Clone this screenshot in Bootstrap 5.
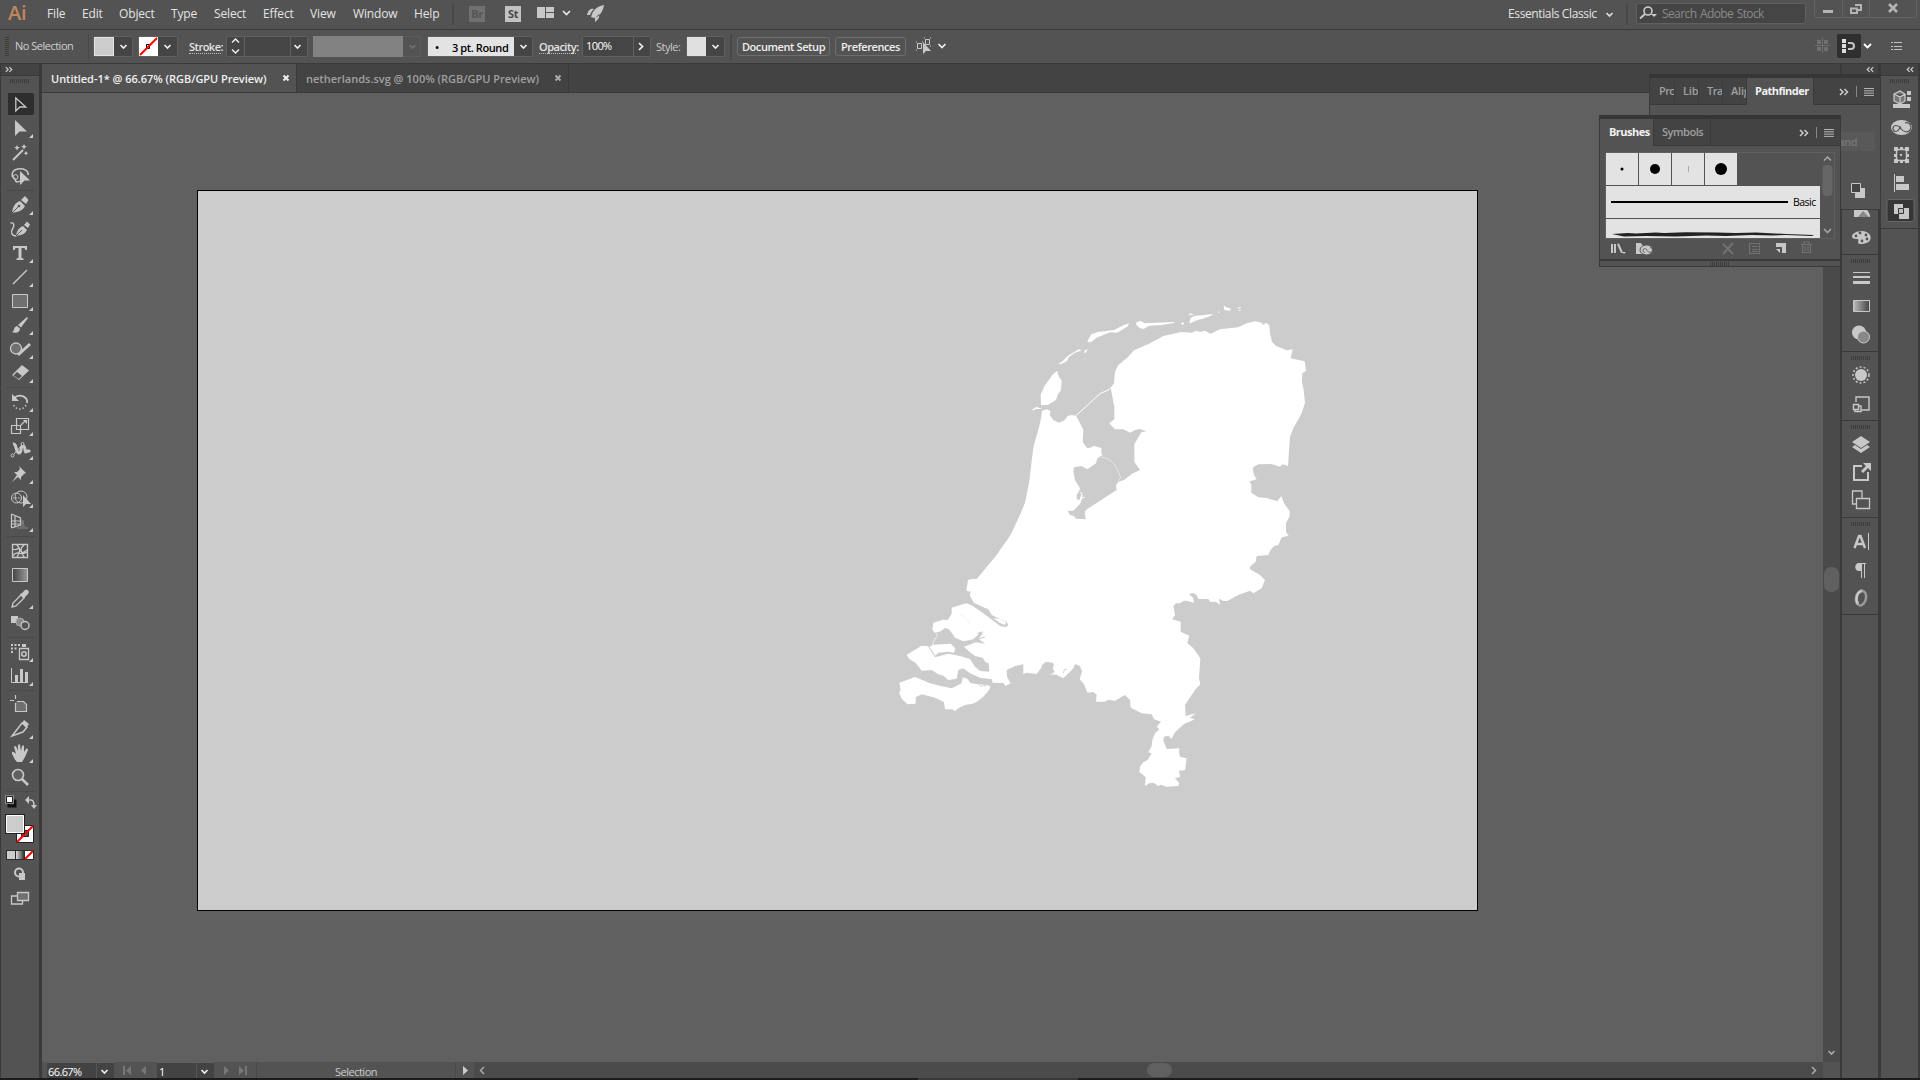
<!DOCTYPE html>
<html lang="en">
<head>
<meta charset="utf-8">
<title>Untitled-1 - Illustrator</title>
<link href="https://cdn.jsdelivr.net/npm/bootstrap@5.3.0/dist/css/bootstrap.min.css" rel="stylesheet">
<style>
:root{--pane:#535353;--deep:#434343;--edge:#3a3a3a;--ink:#c8c8c8}
body{width:1920px;height:1080px;overflow:hidden;background:var(--pane);color:#e4e4e4;font:11px/14px "Open Sans","Noto Sans",sans-serif;white-space:nowrap}
svg{display:block;flex:none}
.k{fill:none;stroke:var(--ink)}
.f{fill:var(--ink)}
.menubar{height:30px;border-bottom:1px solid var(--edge)}
.menubar .menu-item{font-size:12px;line-height:28px;flex:none;letter-spacing:-.15px}
.ai-logo{width:47px;padding-left:8px;font:600 20px/25px "Open Sans",sans-serif;color:#c0875f;flex:none;letter-spacing:-.2px}
.vline{width:2px;background:#484848;flex:none}
.appchip{width:16px;height:16px;background:#c2c2c2;color:#4a4a4a;font:bold 11px/16px "Open Sans",sans-serif;text-align:center;margin-top:6px;flex:none;letter-spacing:-.4px}
.searchbox{width:170px;height:21px;margin-top:3px;background:#454545;border:1px solid #606060;border-radius:3px;color:#8a8a8a;font-size:12px;line-height:20px;letter-spacing:-.33px}
.winctl{width:103px;height:18px;border:1px solid #636363;border-top:0;border-radius:0 0 3px 3px}
.winctl>div{height:17px}
.control{height:34px;border-bottom:1px solid var(--edge)}
.control>*{flex:none}
.dd{height:21px;border:1px solid #606060;border-radius:2px;background:#454545;margin-top:6px}
.lbl{font-size:11px;line-height:14px;margin-top:10px;letter-spacing:-.35px}
.strong-lbl{font-weight:600;border-bottom:1px dotted #bbb;line-height:14px;letter-spacing:-.5px;height:14px}
.barbtn{height:19px;margin-top:7px;border:1px solid #6e6e6e;border-radius:3px;font-weight:600;line-height:18px;text-align:center;letter-spacing:-.4px;color:#eee}
.toolcol{width:42px;background:var(--pane);border-left:1px solid var(--edge);border-right:3px solid var(--edge);flex:none}
.striphead{height:12px;background:var(--deep);border-bottom:1px solid var(--edge)}
.grip{width:19px;height:4px;background:repeating-linear-gradient(90deg,#3c3c3c 0 1px,#535353 1px 2px)}
.tools{padding:0 0 0 7px}
.tools>svg{width:26px;height:24px}
.sep{height:5px;margin-left:-2px;width:30px;border:solid var(--pane);border-width:2px 0;background:#4a4a4a}
.doctabs{height:29px;background:var(--deep);border-bottom:1px solid var(--edge);font-weight:600;font-size:11px;line-height:29px}
.doctabs>div{border-right:1px solid var(--edge);padding-left:9px;height:28px}
.canvas{background:#606060;height:969px;width:1781px;flex:none}
.artboard{width:1281px;height:721px;margin:97px 0 0 155px;border:1px solid #000;background:#ccc}
.vscroll{width:17px;height:969px;background:#4a4a4a;flex:none}
.thumb-v{width:15px;height:25px;border-radius:7px;background:#606060}
.statusbar{height:16px;background:#4b4b4b;flex:none}
.statusbar>*{flex:none}
.stfield{height:16px;background:#434343;border-top:1px solid #606060;border-left:1px solid #555;font-size:11px;line-height:18px;letter-spacing:-.6px;color:#fff;overflow:hidden}
.dock{background:var(--pane);flex:none}
.dockgroup{border-bottom:1px solid var(--edge)}
.dockgroup>.grip{margin:0 auto}
.float-panel{position:absolute;background:var(--pane);border:1px solid var(--edge);border-top:4px solid #363636}
.ptabs{height:27px;background:var(--deep);border-bottom:1px solid var(--edge);font-weight:600;line-height:26px;color:#a0a0a0;letter-spacing:-.2px}
.ptabs>div{flex:none;overflow:hidden;border-right:1px solid var(--edge)}
.ptabs .on{background:var(--pane);color:#f2f2f2;height:27px;font-weight:700;letter-spacing:-.52px}
.brushlist{width:230px;height:87px;border:1px solid #606060;overflow:hidden}
.tile{width:32px;height:32px;background:#e3e3e3}
.brushrow{width:214px;height:32px;background:#e3e3e3;color:#000}
</style>
<script src="https://cdn.jsdelivr.net/npm/bootstrap@5.3.0/dist/js/bootstrap.bundle.min.js"></script>
</head>
<body class="d-flex flex-column">
<svg width="0" height="0" class="position-absolute">
<defs>
<linearGradient id="gr"><stop offset="0" stop-color="#333"/><stop offset="1" stop-color="#ddd"/></linearGradient>
<linearGradient id="gl"><stop offset="0" stop-color="#bbb"/><stop offset="1" stop-color="#444"/></linearGradient>
<linearGradient id="gd"><stop offset="0" stop-color="#444"/><stop offset="1" stop-color="#999"/></linearGradient>
<symbol id="chev" viewBox="0 0 8 6"><path d="M1 1l3 3 3-3" fill="none" stroke="currentColor" stroke-width="1.7"/></symbol>
<symbol id="fly" viewBox="0 0 26 24"><path d="M25 18v4h-4z" fill="#d0d0d0"/></symbol>
<symbol id="dbl" viewBox="0 0 10 8"><path d="M1 1l3 3-3 3M5.500 1l3 3-3 3" fill="none" stroke="currentColor" stroke-width="1.500"/></symbol>
<symbol id="burger" viewBox="0 0 10 8"><path d="M0 .500h10M0 2.800h10M0 5.100h10M0 7.400h10" stroke="#b4b4b4"/></symbol>
</defs></svg>

<!-- Menu bar -->
<header class="menubar d-flex flex-shrink-0">
  <div class="ai-logo">Ai</div>
  <div class="menu-item" style="width:35px">File</div><div class="menu-item" style="width:37px">Edit</div><div class="menu-item" style="width:52px">Object</div><div class="menu-item" style="width:43px">Type</div><div class="menu-item" style="width:49px">Select</div><div class="menu-item" style="width:47px">Effect</div><div class="menu-item" style="width:43px">View</div><div class="menu-item" style="width:61px">Window</div><div class="menu-item" style="width:38px">Help</div>
  <div class="vline my-1" style="margin-right:15px"></div>
  <div class="appchip" style="background:#707070;color:#555">Br</div>
  <div class="appchip" style="margin-left:20px">St</div>
  <svg width="70" height="29" style="margin-left:16px"><path class="f" d="M0 7h8v11H0zM9 7h8v5H9zM9 13h8v5H9z"/><path d="M26 11l3.500 3.500L33 11" fill="none" stroke="#e8e8e8" stroke-width="1.700"/><path class="f" d="M67 5c-6 1-10 4-12 9l-1 3 3 1c5-1 9-6 10-13zM50 15c1-4 3-7 7-6-2 2-3 3-4 6zM58 22v-4l4-4c1 3-1 6-4 8z"/></svg>
  <div class="menu-item ms-auto" style="width:97px;letter-spacing:-.38px">Essentials Classic</div>
  <svg width="18" height="29" color="#ddd"><use href="#chev" x="0" y="12" width="9" height="6"/></svg>
  <div class="vline my-1" style="margin:0 8px 0 3px"></div>
  <div class="searchbox d-flex"><svg width="24" height="19"><circle cx="11" cy="7" r="4" fill="none" stroke="#ccc" stroke-width="1.600"/><path d="M8 10l-5 4.500" stroke="#ccc" stroke-width="1.800"/><path d="M14 10h6l-3 3z" fill="#ccc"/></svg><span style="letter-spacing:-.6px;word-spacing:1px;padding-left:1px">Search Adobe Stock</span></div>
  <div class="winctl d-flex" style="margin:0 3px 0 8px">
    <div style="width:28px;border-right:1px solid #636363"><svg width="27" height="17"><path d="M8 10h10v3H8z" fill="#b4b4b4"/></svg></div>
    <div style="width:27px;border-right:1px solid #636363"><svg width="26" height="17"><path d="M12 5h6v5h-3M8 8.500h6V13H8z" fill="none" stroke="#b4b4b4" stroke-width="2"/></svg></div>
    <div><svg width="44" height="17"><path d="M19 4l8 8M27 4l-8 8" stroke="#b4b4b4" stroke-width="2.600"/></svg></div>
  </div>
</header>

<!-- Control bar -->
<div class="control d-flex flex-shrink-0">
  <div style="width:4px;height:19px;margin:7px 6px 0 5px;background:repeating-linear-gradient(#3c3c3c 0 1px,#535353 1px 2px)"></div>
  <div class="lbl" style="width:73px;margin-top:9px;color:#d0d0d0;letter-spacing:-.5px">No Selection</div>
  <div class="vline" style="height:26px;margin:4px 3px 0 0;width:1px"></div>
  <div class="dd d-flex" style="width:40px;margin-left:1px"><div style="width:20px;background:#ccc;border:1px solid #e4e4e4"></div><svg width="18" height="19" color="#eee"><use href="#chev" x="5" y="7" width="9" height="6"/></svg></div>
  <div class="dd d-flex" style="width:40px;margin-left:5px"><svg width="19" height="19"><path fill="#fff" d="M0 0h19v19H0z"/><path d="M7.500 7.500h3v4h-3z" fill="none" stroke="#000"/><path d="M1 18L18 1" stroke="#f00" stroke-width="2"/></svg><svg width="19" height="19" color="#eee"><use href="#chev" x="5" y="7" width="9" height="6"/></svg></div>
  <div class="lbl strong-lbl" style="margin-left:11px;width:32px">Stroke:</div>
  <div class="dd d-flex" style="width:82px;margin-left:5px"><svg width="17" height="19"><path d="M5 5.500L8.500 2 12 5.500M5 12.500l3.500 3.500 3.500-3.500" fill="none" stroke="#eee" stroke-width="1.500"/></svg><div style="width:46px;border-left:1px solid #606060"></div><svg width="17" height="19" color="#eee" style="border-left:1px solid #606060"><use href="#chev" x="2" y="7" width="9" height="6"/></svg></div>
  <div style="width:90px;height:21px;margin:6px 0 0 5px;background:#828282"></div>
  <div style="width:18px;height:21px;margin-top:6px;border:1px solid #5c5c5c;border-left:0"><svg width="17" height="19" color="#707070"><use href="#chev" x="5" y="7" width="9" height="6"/></svg></div>
  <div class="dd d-flex" style="width:106px;margin-left:6px"><div class="d-flex text-black" style="width:86px;background:#e3e3e3;line-height:21px;font-weight:600;letter-spacing:-.4px"><span style="width:24px;padding-left:7px">•</span>3 pt. Round</div><svg width="18" height="19" color="#eee"><use href="#chev" x="5" y="7" width="9" height="6"/></svg></div>
  <div class="lbl strong-lbl" style="margin-left:6px;width:37px">Opacity:</div>
  <div class="dd d-flex" style="width:69px;margin-left:6px;line-height:18px;letter-spacing:-.6px"><div style="width:50px;padding-left:3px;color:#fff">100%</div><svg width="17" height="19" style="border-left:1px solid #606060"><path d="M5 6l3.500 3.500L5 13" fill="none" stroke="#eee" stroke-width="1.700"/></svg></div>
  <div class="lbl" style="margin-left:5px;width:30px;color:#ccc;letter-spacing:-.5px">Style:</div>
  <div class="dd d-flex" style="width:39px"><div style="width:19px;background:#e0e0e0"></div><svg width="18" height="19" color="#eee"><use href="#chev" x="5" y="7" width="9" height="6"/></svg></div>
  <div class="vline" style="height:26px;margin:4px 5px 0 5px"></div>
  <div class="barbtn" style="width:93px">Document Setup</div>
  <div class="barbtn" style="width:71px;margin-left:5px">Preferences</div>
  <svg width="40" height="33" style="margin-left:9px"><path class="k" d="M2.500 13.500h4v5h-4zM10.500 9.500h4v5h-4zM1 12h1M1 20h1M7 12h1M9 8h1M15 8h1M15 16h1"/><path class="f" d="M8 12v12l3-3h5z"/><path d="M23.500 14l3.500 3.500 3.500-3.500" fill="none" stroke="#eee" stroke-width="1.700"/></svg>
  <svg width="105" height="33" class="ms-auto"><path d="M2 10h4v4H2zM9 10h4v4H9zM2 17h4v4H2zM9 17h4v4H9zM7 8h1v15H7zM0 15h15v1H0z" fill="#707070"/><rect x="22" y="4" width="24" height="24" rx="2" fill="#2f2f2f"/><path fill="#ddd" d="M27 9h4v4h-4zM27 14h4v4h-4zM27 19h4v4h-4z"/><path d="M33 13h3a3 3 0 010 6h-3" fill="none" stroke="#c4c4c4" stroke-width="2"/><path d="M49 14l3.500 3.500L56 14" fill="none" stroke="#fff" stroke-width="1.800"/><path stroke="#c4c4c4" stroke-width="1.200" d="M76 12.500h2M79 12.500h8M76 16.500h2M79 16.500h8M76 19.500h2M79 19.500h8"/></svg>
</div>

<div class="d-flex flex-shrink-0" style="height:1014px">
  <!-- Tools -->
  <aside class="toolcol">
    <div class="striphead"><svg width="20" height="11" color="#ccc"><use href="#dbl" x="4" y="2" width="8" height="7"/></svg></div>
    <div class="grip" style="margin:3px 0 9px 9px"></div>
    <div class="tools">
      <svg viewBox="0 0 26 24"><path d="M-2 3a2 2 0 012-2h24a2 2 0 012 2v18a2 2 0 01-2 2H0a2 2 0 01-2-2z" fill="#2e2e2e"/><path class="k" stroke-width="1.300" d="M7.800 6v13l4-4h6z"/></svg>
      <svg viewBox="0 0 26 24"><path class="f" d="M7 4v16l4.500-4.500H19z"/><use href="#fly"/></svg>
      <svg viewBox="0 0 26 24"><path class="k" stroke-width="2" d="M5 20L15 10"/><path class="f" d="M9 5l1 2 2 .500-2 1-1 2-1-2-2-1 2-.500zM16 4l1 2 2 .500-2 1-1 2-1-2-2-1 2-.500zM18 11l.800 1.500 1.500.800-1.500.700-.800 1.500-.800-1.500-1.500-.700 1.500-.800z"/></svg>
      <svg viewBox="0 0 26 24"><path class="k" stroke-width="1.500" d="M12 17c-3 2-6 0-4-2M7 15C2 12 4 6 10 5s11 2 10 6"/><circle class="k" cx="7.500" cy="13" r="2.400"/><path class="f" d="M12 7v14l4.500-4.500H22z"/></svg>
      <div class="sep"></div>
      <svg viewBox="0 0 26 24"><path class="f" d="M4 20c1-7 3-10 8-12l5 5c-2 4-6 6-13 7zM13 7l4-4 3.500 4L18 11z"/><path d="M4 20l7-7" stroke="#535353"/><circle cx="11" cy="13" r="1.300" fill="#535353"/><use href="#fly"/></svg>
      <svg viewBox="0 0 26 24"><path class="f" d="M8 19c1-6 3-8 7-10l4 4c-2 4-5 5-11 6zM16 8l3-3.500 3 3-2 3.500z"/><path class="k" stroke-width="1.400" d="M2.500 6c4-1 4 3 2 6s-1 7 4 7"/><path d="M8 19l6-6" stroke="#535353"/></svg>
      <svg viewBox="0 0 26 24"><path class="f" d="M5 5h14v4h-1.500l-1-2H13.500v10l2 .500V19h-7v-1.500l2-.500V7H7.500l-1 2H5z"/><use href="#fly"/></svg>
      <svg viewBox="0 0 26 24"><path class="k" stroke-width="1.500" d="M5 19L19 5"/><use href="#fly"/></svg>
      <svg viewBox="0 0 26 24"><path d="M4.500 5.500h15v13h-15z" fill="#707070" stroke="#c8c8c8"/><use href="#fly"/></svg>
      <svg viewBox="0 0 26 24"><path class="f" d="M4 19c3-1 1-5 5-6l3 2.500c0 4-4 5-8 3.500zM10 12L19 4l1 1-7 9.500z"/><use href="#fly"/></svg>
      <svg viewBox="0 0 26 24"><circle cx="8" cy="11.500" r="5.500" fill="#707070" stroke="#c8c8c8" stroke-width="1.300"/><path class="k" stroke-width="3" d="M10 18L22 7"/><use href="#fly"/></svg>
      <svg viewBox="0 0 26 24"><path class="f" d="M4 14L14 4l7 5.500L11 19z"/><path d="M5.500 14.500l3.500-3.500 5 4-3.500 3z" fill="#535353"/><use href="#fly"/></svg>
      <div class="sep"></div>
      <svg viewBox="0 0 26 24"><path class="k" stroke-width="1.700" d="M6 8c6-5 14-1 13 5"/><path class="k" stroke-dasharray="1.500 2" stroke-width="1.500" d="M18 15c-2 5-10 6-13-1"/><path class="f" d="M4 4v7h7z"/><use href="#fly"/></svg>
      <svg viewBox="0 0 26 24"><path class="k" stroke-width="1.200" d="M8.500 4.500h12v11h-12zM3.500 11.500h9v8h-9zM13 11l5-5"/><path class="f" d="M15 6h4v4z"/><use href="#fly"/></svg>
      <svg viewBox="0 0 26 24"><path class="k" stroke-width="3" d="M5 6c4-1 2 8 6 9 3 0 1-7 4-7s1 6 3 6 1-3 4 0"/><circle class="k" cx="4.500" cy="17.500" r="1.500"/><circle cx="14.500" cy="6" r="1.500" fill="#535353" stroke="#c8c8c8"/><path class="k" d="M6 16l8-9"/><use href="#fly"/></svg>
      <svg viewBox="0 0 26 24"><path class="f" d="M11 4l7 7-2 1-3 3v3l-3-3-6 5 5-7-3-3h3l3-3z"/><use href="#fly"/></svg>
      <svg viewBox="0 0 26 24"><circle cx="8.500" cy="12" r="5" class="k"/><circle cx="13" cy="11" r="6" class="k"/><path class="k" stroke-dasharray="1.500 1" d="M5 12h8"/><path class="f" d="M15 9v12l3-3h5z"/><use href="#fly"/></svg>
      <svg viewBox="0 0 26 24"><path class="k" stroke-width="1.200" d="M3.500 4v14M3.500 4l9 4v7l-9 3M7 6v11M3 11h10M3 14h12"/><path stroke="#888" d="M13 16h4M9 18h11"/><path d="M13 9l3 2v4h-3z" fill="#777"/><use href="#fly"/></svg>
      <div class="sep"></div>
      <svg viewBox="0 0 26 24"><path class="k" stroke-width="1.300" d="M4.500 5.500h15v13h-15zM5 10c5 3 5-4 7 1s5 1 7 0M5 17c4-7 8 1 14-4M9 6c4 4 3 7 0 12M16 6c-5 4-3 7 0 12"/></svg>
      <svg viewBox="0 0 26 24"><path d="M4.500 5.500h15v13h-15z" fill="url(#gd)" stroke="#c8c8c8"/></svg>
      <svg viewBox="0 0 26 24"><path class="k" stroke-width="1.300" d="M13 8l3 3-8 8-4 1 1-4z"/><path class="f" d="M12 7l2-1 3-3c3-1 5 2 3 4l-3 3-1 2z"/><use href="#fly"/></svg>
      <svg viewBox="0 0 26 24"><path class="f" d="M3 5h7v7H3z"/><circle cx="12" cy="11" r="4" fill="#888" stroke="#aaa"/><circle cx="17" cy="14.500" r="4" fill="#535353" stroke="#c8c8c8" stroke-width="1.400"/></svg>
      <div class="sep"></div>
      <svg viewBox="0 0 26 24"><path class="k" stroke-width="1.300" d="M11.500 8.500h9v11h-9z"/><path class="f" d="M14 4h4v3h-4zM3 4h2v2H3zM6.500 4h2v2h-2zM10 4h2v2h-2zM3 7.500h2v2H3zM6.500 7.500h2v2h-2zM3 11h2v2H3z"/><circle class="k" stroke-width="1.500" cx="16" cy="14" r="2.200"/><use href="#fly"/></svg>
      <svg viewBox="0 0 26 24"><path class="k" d="M3.500 4v14.500H20"/><path class="f" d="M7 11h3v7H7zM12 5h3v13h-3zM17 8h3v10h-3z"/><use href="#fly"/></svg>
      <div class="sep"></div>
      <svg viewBox="0 0 26 24"><path d="M7.500 8.500h8l3 3v7h-11z" fill="#707070"/><path class="k" stroke-width="1.200" d="M7.500 10v8.500h11v-7l-3-3H9M2 7.500h4M7.500 2v4"/></svg>
      <svg viewBox="0 0 26 24"><path class="k" stroke-width="1.500" d="M4 19L14 6l5 4-4 5z"/><path class="f" d="M14 6l2-3 5 4-3 4z"/><use href="#fly"/></svg>
      <svg viewBox="0 0 26 24"><path class="f" d="M4 11c1-1 3 1 4 2L6 6c1-2 2-1 3 1l1 3V4c1-1 2-1 2 0l1 6 1-5c1-1 2-1 2 1v5l2-3c1-1 2 0 2 1l-3 7-3 5h-5c-3-3-4-7-5-8z"/><use href="#fly"/></svg>
      <svg viewBox="0 0 26 24"><circle cx="10" cy="10" r="5.500" fill="#606060" stroke="#c8c8c8" stroke-width="1.600"/><path class="k" stroke-width="2.500" d="M14 14l6 6"/></svg>
      <div class="sep"></div>
      <svg style="width:33px;height:116px;margin-left:-4px"><path d="M11 5.500V12H5V9" fill="none" stroke="#111" stroke-width="3"/><path d="M2.500 2.500h6v6h-6z" fill="#fff" stroke="#222"/><path d="M1.500 1.500h8v8h-8z" fill="none" stroke="#888"/><path class="k" stroke-width="1.500" d="M24 6h3c2 0 3 1 3 6"/><path class="f" d="M21 6l4-4v8zM27 11h6l-3 4z"/>
        <path d="M12.500 31.500h17v17h-17z" fill="#fff" stroke="#222"/><path d="M17.500 36.500h7v6h-7z" fill="#535353" stroke="#222"/><path d="M13 48L29 32" stroke="#f00" stroke-width="2"/><path d="M1 20h20v20H1z" fill="#222"/><path d="M2.500 21.500h17v17h-17z" fill="#ccc" stroke="#fff"/>
        <path fill="#2e2e2e" d="M2 56h28v10H2z"/><path fill="#ccc" d="M3 57h8v8H3z"/><path fill="url(#gr)" d="M12 57h8v8h-8z" transform="matrix(-1 0 0 1 32 0)"/><path fill="#fff" d="M21 57h8v8h-8z"/><path d="M21 65l8-8" stroke="#f00" stroke-width="2"/>
        <circle cx="15" cy="78.500" r="4" class="k" stroke-width="2"/><path class="f" d="M15 79h6v7h-6z"/>
        <path stroke="#c8c8c8" stroke-width="1.300" d="M13.500 98.500h11v8h-11z" fill="#707070"/><path class="k" stroke-width="1.300" d="M13 102H7.500v8h11v-3.500"/></svg>
    </div>
  </aside>

  <!-- Document window -->
  <main class="d-flex flex-column" style="width:1798px">
    <div class="doctabs d-flex">
      <div class="d-flex" style="width:255px;background:var(--pane);color:#f0f0f0"><span style="width:231px;letter-spacing:-.03px">Untitled-1* @ 66.67% (RGB/GPU Preview)</span><svg width="8" height="28"><path d="M1.500 11.500l5 5M6.500 11.500l-5 5" stroke="#eee" stroke-width="2"/></svg></div>
      <div class="d-flex" style="width:272px;color:#a0a0a0"><span style="width:248px">netherlands.svg @ 100% (RGB/GPU Preview)</span><svg width="8" height="28"><path d="M1.500 11.500l5 5M6.500 11.500l-5 5" stroke="#aaa" stroke-width="2"/></svg></div>
    </div>
    <div class="d-flex">
      <div class="canvas">
        <div class="artboard">
          <svg width="1279" height="719" viewBox="198 191 1279 719" fill="#fff">
            <g transform="translate(1000 290) scale(.33333)">
              <path d="M-4 786L20 752 35 728 60 675 75 638 87 580 93 530 99 480 103 460 115 420 123 385 126 362 140 358 152 363 149 375 160 390 176 398 192 392 203 378 215 375 228 377 238 395 250 420 248 457 262 475 275 472 281 467 304 474 304 490 308 495 292 505 288 520 262 538 245 528 222 532 220 545 225 570 240 595 235 612 242 605 248 612 246 620 256 621 246 626 240 642 220 662 203 662 210 675 222 678 228 686 257 688 254 665 262 657 350 600 348 585 356 575 372 570 395 552 420 540 403 515 403 463 424 427 440 424 420 417 405 420 390 428 370 418 345 418 328 400 343 388 343 350 335 310 332 293 342 280 345 245 355 225 385 200 402 181 450 160 490 138 545 126 575 128 590 122 600 126 615 122 632 131 660 118 715 112 740 100 765 94 785 98 790 105 798 98 808 106 810 130 816 155 828 168 860 181 878 178 872 205 914 214 918 243 907 250 906 275 911 300 915 338 905 370 880 415 870 440 864 528 848 523 840 530 815 522 775 523 762 530 758 535 762 555 770 568 748 574 754 584 754 608 775 622 800 624 832 634 844 618 852 640 870 665 868 680 858 700 858 725 866 737 845 742 835 765 822 768 806 786z"/>
              <path d="M123 345l-1-30 10-25 25-35 14-13 6 18 8 12-2 28-10 15-5 15-25 15z"/>
              <path d="M97 358l12-7 18 5-22 2-6 4zM174 220l10-3 20-20 32-19 10 3-23 8-18 14-3 9-19 11zM252 188l3-8 8-2-5 10zM264 150l10-17 20-7 48-6 28-14 17-6-3 9-32 19-22-1-40 16-18 14-10-1zM409 97l12-4 14 7 86-4 4 2-40 7-38 2-16 10-12-3-10-10zM543 100l6-4 3 6-5 3zM568 98l4-14 10-6 58-6-10 7-22 7-22 6-14 8zM566 76l4-6 12 4-12 2zM653 64l6 2-3 4zM671 46l8 6 15 4-6 6-15-2zM710 53l15-1-8 5zM713 62l8-3 1 4z"/>
              <path d="M228 377L300 311 327 299 334 291" fill="none" stroke="#fff" stroke-width="3"/>
              <path d="M304 503c28-5 48 30 58 60l-8 10" fill="none" stroke="#fff" stroke-width="1.500"/>
              <path d="M230 615l8-12 6 10-6 18-8-4z" fill="#ccc"/>
            </g>
            <g transform="translate(880 540) scale(.33333)">
              <path d="M388-6L350 45 290 117 275 117 264 120 259 152 272 155 269 165 281 188 298 196 310 202 325 208 335 225 380 246 385 256 378 261 362 259 330 235 300 213 275 196 258 190 215 203 215 222 203 240 190 239 160 248 157 268 164 278 182 274 195 264 207 268 218 283 225 293 250 304 280 298 296 283 292 279 308 274 306 284 294 294 303 302 316 311 288 307 252 320 270 337 285 348 308 353 316 366 326 370 328 395 300 393 285 380 270 357 240 348 205 341 165 352 144 319 125 317 90 338 80 345 88 357 108 370 125 392 155 390 175 403 190 407 205 420 230 416 235 390 250 385 270 400 300 413 335 418 338 428 370 429 377 438 392 430 381 410 380 390 405 378 430 373 430 403 440 398 470 402 484 383 485 376 498 365 518 368 522 375 518 385 524 395 515 402 503 403 530 404 550 415 570 395 580 385 585 372 600 378 606 395 599 418 612 433 622 458 640 456 650 464 648 485 675 485 685 479 705 482 735 465 750 480 752 503 785 520 815 523 822 538 843 545 830 560 838 568 825 580 817 600 815 618 805 637 815 640 803 660 790 667 780 680 778 695 797 712 795 738 808 730 820 728 835 738 842 734 860 740 895 738 898 730 885 715 900 710 897 692 915 690 920 655 900 650 897 636 898 625 860 627 850 602 852 590 865 587 875 597 885 577 912 552 945 538 930 533 947 520 917 528 915 495 945 450 961 433 957 415 961 355 940 325 922 310 928 287 902 275 902 245 877 238 885 225 880 198 888 190 900 190 912 182 925 183 942 189 939 173 927 162 940 159 950 165 955 177 985 177 990 185 1008 185 1020 195 1017 176 1028 182 1042 183 1075 165 1110 152 1120 160 1145 145 1155 120 1140 105 1110 88 1110 80 1127 65 1130 48 1165 45 1175 22 1195 10 1203-6z"/>
              <path d="M58 428L105 411 122 418 150 430 182 438 215 445 245 430 248 412 262 416 272 430 310 434 331 438 328 449 310 470 290 486 275 492 258 494 240 502 225 513 216 508 195 508 192 487 175 478 160 472 125 463 107 472 107 491 83 493 66 478 57 458 62 450zM148 320L160 314 212 311 226 325 222 338 205 335 175 338 165 347 160 338z"/>
              <path d="M170 278l2 9-12 18-2 10" fill="none" stroke="#fff" stroke-width="2"/>
              <path d="M340 234l20 3 18 10-3 7-14-4z"/>
              <path d="M294 432l10 8 8-7 3 8M550 400l3-11 8-1" fill="none" stroke="#ccc" stroke-width="2.500"/>
              <path d="M238 224q27 8 30 30" fill="none" stroke="#e8e8e8" stroke-width="1.500"/>
              <path d="M302 284l-6 12 20-5" fill="none" stroke="#ccc" stroke-width="3"/>
            </g>
          </svg>
        </div>
      </div>
      <div class="vscroll"><div class="thumb-v" style="margin:474px 1px 0"></div><svg width="17" height="20" style="margin-top:450px" color="#aaa"><use href="#chev" x="4" y="8" width="9" height="6"/></svg></div>
    </div>
    <div class="statusbar d-flex">
      <div style="width:4px;background:var(--pane)"></div>
      <div class="stfield" style="width:50px;padding-left:1px">66.67%</div><div class="stfield" style="width:18px"><svg width="17" height="15" color="#eee"><use href="#chev" x="3" y="6" width="9" height="6"/></svg></div>
      <svg width="42" height="16"><path fill="#535353" d="M0 0h42v16H0z"/><path d="M9 4h2v9H9zM17 4v9l-5-4.500zM32 4v9l-5-4.500z" fill="#777"/></svg>
      <div class="stfield" style="width:40px;padding-left:2px">1</div><div class="stfield" style="width:18px"><svg width="17" height="15" color="#eee"><use href="#chev" x="3" y="6" width="9" height="6"/></svg></div>
      <svg width="42" height="16"><path fill="#535353" d="M0 0h42v16H0z"/><path d="M10 4v9l5-4.500zM25 4v9l5-4.500zM31 4h2v9h-2z" fill="#777"/></svg>
      <div class="text-center" style="width:199px;background:var(--pane);border-left:1px solid #4a4a4a;line-height:19px;color:#ccc;letter-spacing:-.5px;overflow:hidden;height:16px">Selection</div>
      <svg width="19" height="16"><path fill="#535353" d="M1 0h18v16H1z"/><path d="M8 4v9l5-4.500z" fill="#ccc"/></svg>
      <svg width="1349" height="16"><path d="M10 5L6.500 8.500 10 12M1338 5l3.500 3.500-3.500 3.500" fill="none" stroke="#aaa" stroke-width="1.500"/><rect x="673" y="1" width="25" height="14" rx="7" fill="#606060"/></svg>
      <div style="background:var(--pane);flex:1 1 0"></div>
    </div>
  </main>

  <!-- Docks -->
  <div class="dock" style="width:41px;border:solid var(--edge);border-width:0 3px 0 2px">
    <div class="striphead"><svg width="34" height="11" color="#ccc"><use href="#dbl" transform="matrix(-1 0 0 1 32 2)" width="8" height="7"/></svg></div>
    <div class="dockgroup" style="height:179px"><svg width="36" height="178"><path d="M12 141v-9h11q5 4 5 9z" class="f"/><path d="M16 141l5-6 6 6z" fill="#888"/><path class="f" d="M10 160c1-5 14-8 18-1 3 7-5 9-9 9-6 0 0-5-4-5-2 0-5 0-5-3z"/><g fill="#535353"><circle cx="14" cy="160" r="1.400"/><circle cx="18" cy="157" r="1.400"/><circle cx="24" cy="159" r="1.400"/><circle cx="25" cy="163" r="1.400"/><circle cx="20" cy="165" r="1.400"/></g></svg></div>
    <div class="dockgroup pt-1" style="height:97px"><div class="grip"></div><svg width="36" height="88"><path class="f" d="M11 9h17v1H11zM11 13h17v2H11zM11 18h17v3H11z"/><path d="M11.500 37.500h16v11h-16z" fill="url(#gl)" stroke="#c8c8c8"/><circle class="f" cx="17" cy="69.500" r="7"/><circle cx="21.500" cy="74" r="6" fill="#888" stroke="#c8c8c8"/></svg></div>
    <div class="dockgroup pt-1" style="height:69px"><div class="grip"></div><svg width="36" height="60"><circle class="f" cx="19" cy="15" r="6"/><circle class="k" cx="19" cy="15" r="8" stroke-dasharray="2 2" stroke-width="1.500"/><path class="k" stroke-width="1.400" d="M14 42v-5h13v13H19M11.500 44.500h5v5h-5zM13 50v1.500h6V46h-2"/></svg></div>
    <div class="dockgroup pt-1" style="height:97px"><div class="grip"></div><svg width="36" height="88"><path class="f" d="M19 7l9 6-9 6-9-6zM10 18l3-2 6 4 6-4 3 2-9 6z"/><path class="k" stroke-width="2" d="M20 37h-8v14h14v-8"/><path class="f" d="M21 34h8v8l-3-3-5 5-2-2 5-5z"/><path class="k" stroke-width="1.300" d="M20 69v-7h-9.500v13H15M14.500 69.500h13v10h-13z"/></svg></div>
    <div class="dockgroup pt-1" style="height:97px"><div class="grip"></div><svg width="36" height="88"><path class="k" stroke-width="2.400" d="M12.500 22l4.500-12h1.500l4.500 12M14 18h7.500"/><path class="f" d="M26 7h1v17h-1z"/><path class="f" d="M17 37h7v1h-1v14h-1V38h-2v14h-1v-7h-2c-5 0-5-8 0-8z"/><ellipse cx="19" cy="72" rx="5" ry="7.500" transform="rotate(12 19 72)" fill="none" stroke="#999" stroke-width="2.500"/><path class="k" stroke-width="2.500" d="M20 65c-5 1-7 8-4 13"/></svg></div>
  </div>
  <div class="dock" style="width:39px;border-right:2px solid var(--edge)">
    <div class="striphead"><svg width="34" height="11" color="#ccc"><use href="#dbl" transform="matrix(-1 0 0 1 33 2)" width="8" height="7"/></svg></div>
    <div class="dockgroup" style="height:153px;padding-top:3px"><div class="grip"></div><svg width="37" height="144"><g transform="translate(-1881 -83)"><path d="M1894 94l6-3 5 3v7l-5 3-6-3zM1894 94l6 3 5-3M1900 97v7" fill="#777" stroke="#ccc" stroke-width="1.200"/><path class="f" d="M1907 91h4v4h-4zM1907 97h4v4h-4zM1893 104h17v4h-17z"/><ellipse cx="1901.500" cy="127.500" rx="10.500" ry="7.500" class="f"/><path d="M1905 123a4.500 4.500 0 110 8.500c-4 0-4-6-9-6a3 3 0 100 6c3 0 3-3 5-5" fill="none" stroke="#535353" stroke-width="1.200"/><path class="k" stroke-width="1.500" d="M1896.500 149.500h10v11h-10z"/><path class="f" d="M1894 147h4v4h-4zM1900 147h3v3h-3zM1905 147h4v4h-4zM1894 159h4v4h-4zM1900 160h3v3h-3zM1905 159h4v4h-4zM1894 154h3v3h-3zM1906 154h3v3h-3zM1900 154h2v2h-2zM1894 174h1v18h-1zM1896 176h8v6h-8zM1896 184h13v6h-13z"/><rect x="1887" y="199.500" width="27" height="22" rx="2" fill="#363636" stroke="#666"/><path class="f" d="M1894 204h9v4h6v11h-10v-5h-5z"/><path d="M1898.500 208.500h5v5h-5z" fill="#bbb" stroke="#333"/></g></svg></div>
  </div>
</div>
<div class="flex-grow-1" style="background:linear-gradient(90deg,#1d1b1c 918px,#3a3839 918px 1078px,#1d1b1c 1078px)"></div>

<!-- Pathfinder panel -->
<section class="float-panel" style="left:1649px;top:74px;width:232px;height:136px">
  <div class="ptabs d-flex">
    <div style="width:25px;padding-left:9px;letter-spacing:-.6px">Pro</div><div style="width:24px;padding-left:8px">Lib</div><div style="width:24px;padding-left:8px;letter-spacing:-.5px">Tra</div><div style="width:24px;padding-left:8px">Alig</div><div class="on" style="width:67px;padding-left:8px">Pathfinder</div>
    <svg class="ms-auto" width="42" height="26" color="#ccc"><use href="#dbl" x="1" y="10" width="10" height="8"/><path stroke="#888" d="M18.500 8v11"/><use href="#burger" x="26" y="10" width="10" height="8"/></svg>
  </div>
  <div class="d-flex justify-content-end" style="padding:27px 5px 0 0"><div style="width:60px;height:19px;background:#595959;border-radius:2px;color:#777;font-weight:600;line-height:20px;text-align:right;padding-right:18px;letter-spacing:-.5px">Expand</div></div>
  <svg width="230" height="30" style="margin-top:27px"><path class="f" d="M206 10h9v10h-10v-4z"/><path d="M201.500 5.500h9v9h-9z" fill="#444" stroke="#c8c8c8"/></svg>
</section>

<!-- Brushes panel -->
<section class="float-panel" style="left:1599px;top:115px;width:242px;height:152px">
  <div class="ptabs d-flex">
    <div class="on" style="width:54px;padding-left:9px">Brushes</div><div style="width:57px;padding-left:8px;letter-spacing:-.45px">Symbols</div>
    <svg class="ms-auto" width="42" height="26" color="#ccc"><use href="#dbl" x="1" y="10" width="10" height="8"/><path stroke="#888" d="M18.500 8v11"/><use href="#burger" x="26" y="10" width="10" height="8"/></svg>
  </div>
  <div class="brushlist d-flex" style="margin:6px 0 0 5px">
    <div class="d-flex flex-column" style="gap:1px;width:216px">
      <div class="d-flex" style="gap:1px"><svg class="tile"><circle cx="16" cy="16" r="1.500"/></svg><svg class="tile"><circle cx="16" cy="16" r="5"/></svg><svg class="tile"><path d="M16.500 13v6" stroke="#aaa"/></svg><svg class="tile"><circle cx="16" cy="16" r="6"/></svg></div>
      <div class="brushrow d-flex"><div style="width:177px;height:2px;margin:15px 5px 0 5px;background:#000"></div><span style="line-height:33px;font-size:10.500px;letter-spacing:-.5px">Basic</span></div>
      <svg class="brushrow" width="214" height="32"><path d="M6 15l16-1 8 .500 20-1 8 .500 22-.800 30 .300 20 .500 20-.500 30 1.500 28 1-2 1-26-1-14 .500-20-.500-26 1-20-.500-30 1-30-.500-22 .500z" fill="#222"/></svg>
    </div>
    <svg width="13" height="85"><path d="M3 7.500L6.500 4 10 7.500M3 76l3.500 3.500L10 76" fill="none" stroke="#aaa" stroke-width="1.500"/><rect x="1.500" y="12" width="10" height="31" rx="4" fill="#666"/></svg>
  </div>
  <svg width="240" height="20"><g transform="translate(-1600 -239)"><path class="f" d="M1611 244h2v9h-2zM1614 244h2v9h-2zM1617 244l2-.500 4 9-2 .500zM1622 252h4l-2 2z"/><path class="f" d="M1636 243h5l1 2h8v9h-14z"/><ellipse cx="1646.500" cy="250" rx="6.500" ry="5" fill="#c8c8c8" stroke="#535353"/><path d="M1650 247.500a2.500 2.500 0 110 5c-3 0-3-4-5-4a2 2 0 100 4" fill="none" stroke="#535353" stroke-width=".8"/><path d="M1723 244l10 10M1733 243l-10 11" stroke="#727272" stroke-width="2"/><path d="M1749.500 243.500h10v10h-10zM1752 246.500h6M1752 249.500h6M1752 251.500h6" fill="none" stroke="#707070" stroke-width="1.200"/><path class="f" d="M1776 243h10v10h-4v-6h-6zM1776 249h4v4z"/><path d="M1801 244.500h11M1804 244v-2h5v2M1802.500 245v7.500h8V245M1805 246v5M1808 246v5" fill="none" stroke="#727272" stroke-width="1.200"/></g></svg>
  <div style="height:8px;border-top:2px solid var(--edge)"><div class="grip" style="margin:1px 0 0 110px"></div></div>
</section>
</body>
</html>
